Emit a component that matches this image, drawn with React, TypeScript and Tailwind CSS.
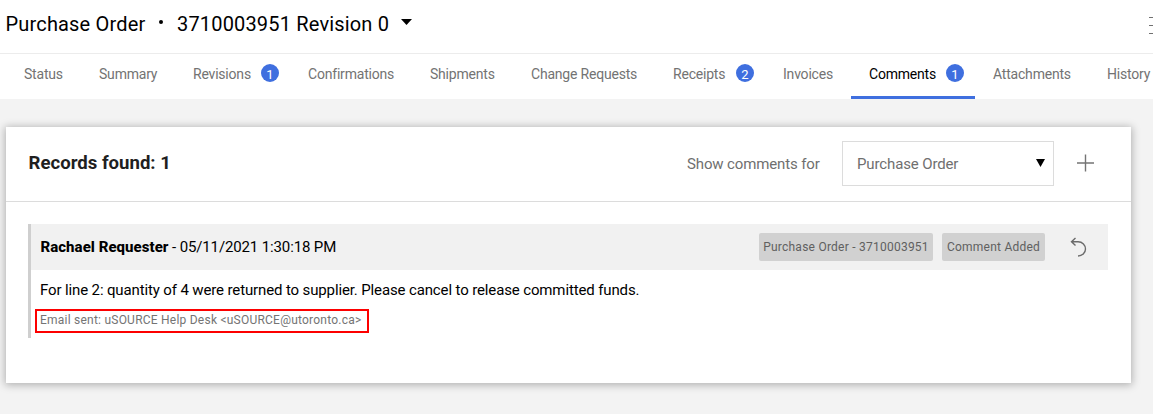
import { clsx } from "clsx";

const tabs = [
  { label: "Status", width: "w-[75px]" },
  { label: "Summary", width: "w-[94px]" },
  { label: "Revisions", width: "w-[115px]", count: 1 },
  { label: "Confirmations", width: "w-[122px]" },
  { label: "Shipments", width: "w-[101px]" },
  { label: "Change Requests", width: "w-[142px]" },
  { label: "Receipts", width: "w-[110px]", count: 2 },
  { label: "Invoices", width: "w-[86px]" },
  { label: "Comments", width: "w-[124px]", count: 1, active: true },
  { label: "Attachments", width: "w-[114px]" },
  { label: "History", width: "w-[80px]" },
];

function Header() {
  return (
    <header className="flex h-[54px] items-start border-b border-[#ececec] bg-white pl-[5.5px] text-[20px] leading-[24px] tracking-[0.17px] text-black">
      <h1 className="mt-[12px] w-[153.5px]">Purchase Order</h1>
      <span className="mt-[20px] h-1 w-1 rounded-full bg-black" />
      <button className="mt-[12px] ml-[14px] flex">
        <span className="w-[224px] text-left">3710003951 Revision 0</span>
        <svg className="mt-[7px] h-[6px] w-[11px]" viewBox="0 0 11 6">
          <path d="M0 0H11L5.5 6Z" />
        </svg>
      </button>
      <svg className="mt-[16px] ml-auto h-[18px] w-1 stroke-[#707070]" viewBox="0 0 4 18" fill="none">
        <path d="M0 1.5H4M0 9.5H4M0 17.5H4" />
      </svg>
    </header>
  );
}

function Tabs() {
  return (
    <nav className="flex h-[45px] bg-white text-[14px] tracking-[-0.2px] text-[#737373]">
      <div className="w-[6px] shrink-0" />
      {tabs.map((tab) => (
        <button
          key={tab.label}
          className={clsx(
            "flex shrink-0 items-start justify-between border-b-[3px] pr-[11px] pl-[18px] pt-[10px] whitespace-nowrap leading-[20px]",
            tab.width,
            tab.active ? "border-[#3f6fdf] text-black" : "border-transparent",
          )}
        >
          <span>{tab.label}</span>
          {tab.count && (
            <span className="flex h-[18px] w-[18px] justify-center rounded-full bg-[#3f6fdf] text-[13px] leading-[21px] tracking-normal text-white">
              {tab.count}
            </span>
          )}
        </button>
      ))}
    </nav>
  );
}

function Comment() {
  return (
    <article className="mt-[22px] mr-[23px] ml-[22px] h-[114px] border-l-[3px] border-[#cfcfcf] text-[15px] tracking-[-0.13px] text-black">
      <div className="flex h-[46px] items-center bg-[#f1f1f1] pl-[9.5px]">
        <p>
          <b className="font-extrabold tracking-[0.04px]">Rachael Requester</b> - 05/11/2021 1:30:18 PM
        </p>
        <span className="ml-auto flex h-[28px] w-[174px] items-center justify-center rounded-[2px] bg-[#d1d1d1] text-[12px] tracking-[0.24px] text-[#606060]">
          Purchase Order - 3710003951
        </span>
        <span className="ml-[9px] flex h-[28px] w-[103px] items-center justify-center rounded-[2px] bg-[#d1d1d1] text-[12px] tracking-[0.24px] text-[#606060]">
          Comment Added
        </span>
        <button className="mr-[21px] ml-[25px]">
          <svg className="h-[20px] w-[17px]" viewBox="0 0 17 20" fill="none" stroke="#6b6b6b" strokeWidth="1.4">
            <path d="M5.5 1L1.5 4.8L5.5 8.5M1.5 4.8H8C12.5 4.8 15.5 8 15.5 12C15.5 16 12 18.8 8 19" />
          </svg>
        </button>
      </div>
      <p className="pt-[9px] pl-[9px] leading-[22px]">
        For line 2: quantity of 4 were returned to supplier. Please cancel to release committed funds.
      </p>
      <p className="mt-[8px] ml-[4px] h-[24px] w-[334px] border-2 border-[#fd0000] pl-[3px] text-[12px] leading-[18px] tracking-[0.23px] whitespace-nowrap text-[#747474]">
        Email sent: uSOURCE Help Desk &lt;uSOURCE@utoronto.ca&gt;
      </p>
    </article>
  );
}

export default function App() {
  return (
    <div className="h-[414px] overflow-hidden bg-[#f3f3f3] font-['Roboto',sans-serif]">
      <Header />
      <Tabs />
      <main className="mt-[28px] ml-[6px] h-[256px] w-[1125px] bg-white shadow-[0_1px_8px_1px_rgba(0,0,0,0.28)]">
        <div className="flex h-[75px] items-center border-b border-[#dcdcdc] pb-[2px] pl-[22.5px] text-[15px] tracking-[-0.13px] text-[#6f6f6f]">
          <h2 className="pt-[2px] text-[18.6px] font-bold tracking-normal text-[#1f1f1f]">Records found: 1</h2>
          <span className="ml-auto w-[155px] pt-[2px]">Show comments for</span>
          <button className="flex h-[45px] w-[212px] items-center justify-between border border-[#dcdcdc] pr-[8px] pl-[14px]">
            <span className="pt-[2px]">Purchase Order</span>
            <svg className="h-[8px] w-[9px] fill-black" viewBox="0 0 9 8">
              <path d="M0 0H9L4.5 8Z" />
            </svg>
          </button>
          <button className="mr-[36px] ml-[22px]">
            <svg className="h-[18px] w-[19px]" viewBox="0 0 19 18" fill="none" stroke="#747474" strokeWidth="1.4">
              <path d="M1 9H18M9.5 .5V17.5" />
            </svg>
          </button>
        </div>
        <Comment />
      </main>
    </div>
  );
}
